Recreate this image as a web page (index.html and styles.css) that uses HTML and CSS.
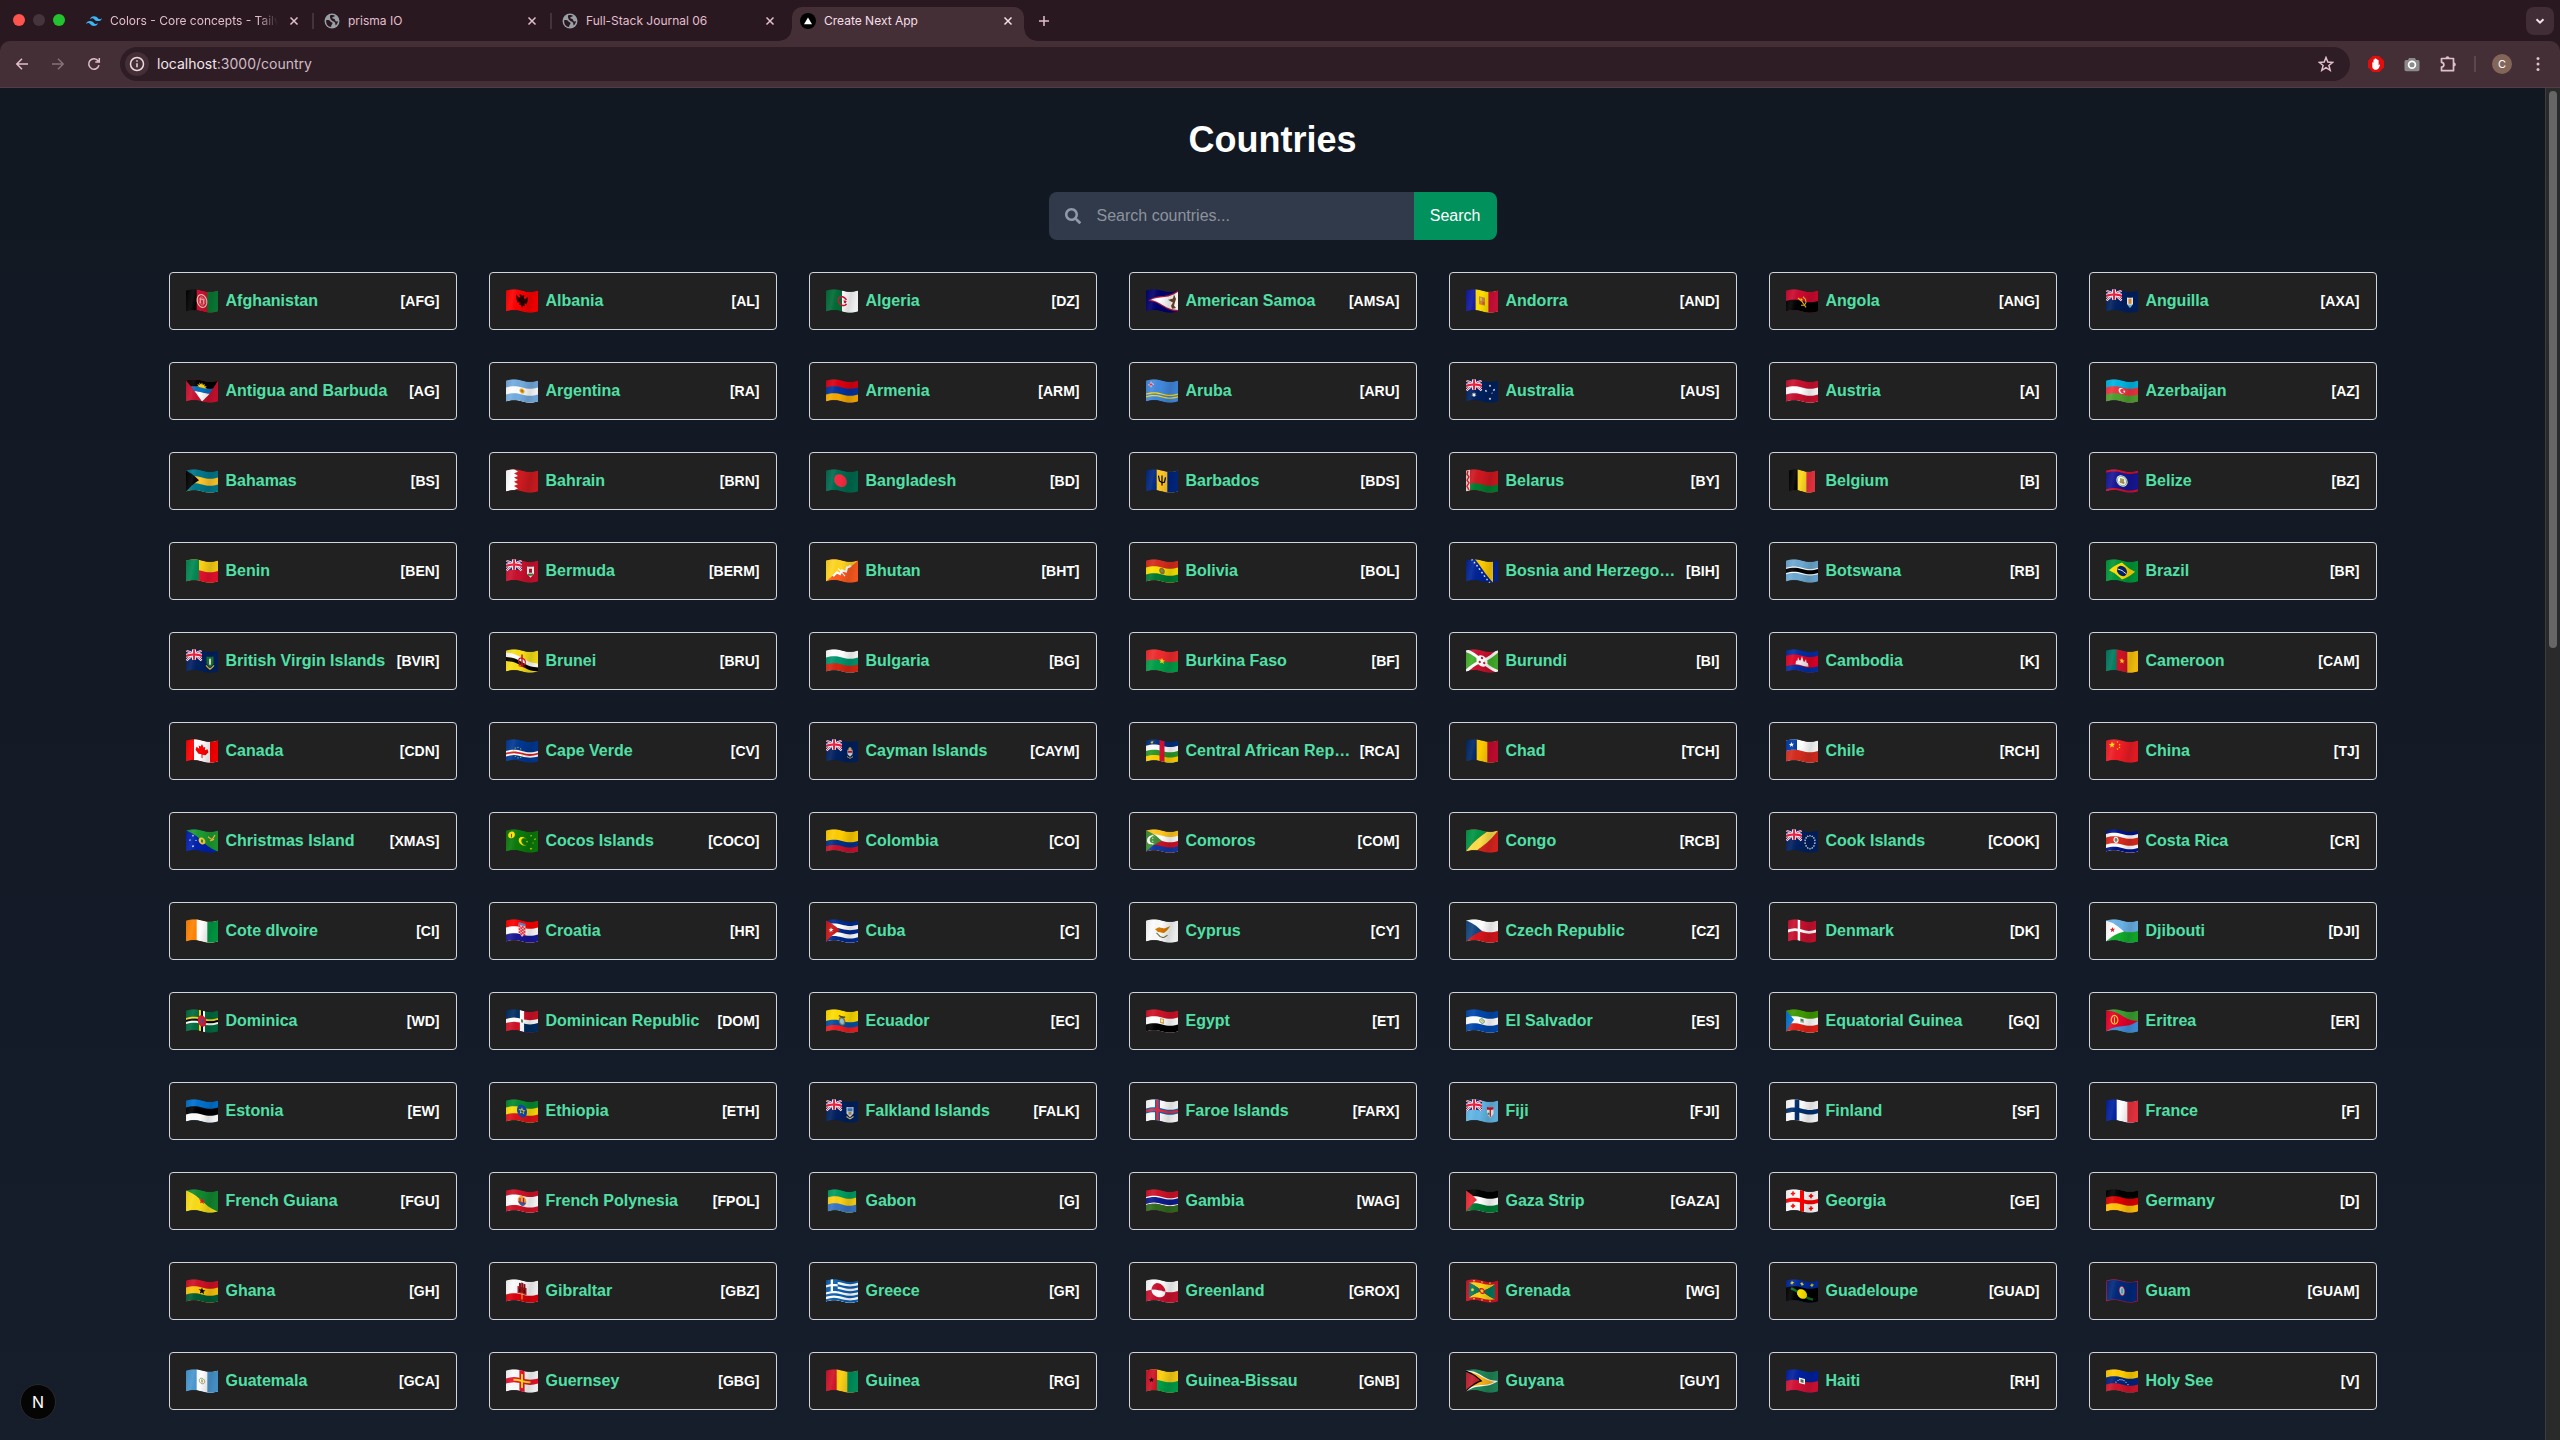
FILE: index.html
```html
<!DOCTYPE html>
<html lang="en">
<head>
<meta charset="utf-8">
<meta name="viewport" content="width=device-width, initial-scale=1">
<title>Create Next App</title>
<link rel="stylesheet" href="styles.css">
<script src="flags.js" defer></script>
</head>
<body>
<svg class="defs" aria-hidden="true">
  <defs>
    <clipPath id="wave"><path id="wave-outline" /></clipPath>
    <linearGradient id="shade" x1="0" x2="1" y1="0" y2="0.15">
      <stop offset="0" stop-color="#000" stop-opacity="0.1" />
      <stop offset="0.25" stop-color="#fff" stop-opacity="0.08" />
      <stop offset="0.5" stop-color="#000" stop-opacity="0" />
      <stop offset="0.8" stop-color="#000" stop-opacity="0.14" />
      <stop offset="1" stop-color="#000" stop-opacity="0.06" />
    </linearGradient>
    <symbol id="close" viewBox="0 0 10 10"><path d="M1.500 1.500l7 7M8.500 1.500l-7 7" fill="none" stroke="currentColor" stroke-width="1.500" /></symbol>
    <symbol id="globe" viewBox="0 0 16 16">
      <circle cx="8" cy="8" r="7.500" fill="#98a0a6" />
      <path d="M2.200 7.200c1.200-.3 3.600 0 4.300 1.200.6 1 1.900.5 2 1.800 0 1.200-1.400 1.400-1.400 3.800C4 13.700 1.700 11 2.200 7.200zM6 2.400c1.600-.7 3.600-.6 5 .3-.4 1.200-2.200.8-2.700 2-.4 1.100 1.300.7 2.200 1.300 1.200.8.300 2.300 1.600 2.400.8.100 1.300-.3 1.800-.2-.1 1.700-.9 3.200-2.100 4.200-.9-1-.1-2.400-1.400-3.300C9.200 8.300 8.400 8.200 7.300 7 6.400 6 5.700 4 6 2.400z" fill="#2a1821" />
    </symbol>
  </defs>
</svg>

<header class="browser">
  <div class="strip">
    <div class="lights"><i class="light light-red"></i><i class="light light-off"></i><i class="light light-green"></i></div>
    <nav class="tabs" aria-label="Tabs">
      <div class="tab">
        <svg class="favicon" viewBox="0 0 16 16"><path d="M8 3.300C5.900 3.300 4.500 4.400 4 6.500c.8-1 1.700-1.400 2.800-1.200.6.200 1 .6 1.500 1.100C9.100 7.200 10 8.100 12 8.100c2.100 0 3.500-1.100 4-3.200-.8 1-1.700 1.400-2.800 1.200-.6-.2-1-.6-1.500-1.100C10.900 4.200 10 3.300 8 3.300zM4 8.100c-2.100 0-3.500 1.100-4 3.200.8-1 1.700-1.400 2.800-1.200.6.200 1 .6 1.500 1.100.8.800 1.700 1.700 3.700 1.700 2.100 0 3.500-1.100 4-3.200-.8 1-1.700 1.400-2.800 1.200-.6-.2-1-.6-1.500-1.100C6.900 9 6 8.100 4 8.100z" fill="#38b6f8" /></svg>
        <span class="tab-title fade">Colors - Core concepts - Tailwind CSS</span>
        <button class="tab-close" aria-label="Close tab"><svg viewBox="0 0 10 10"><use href="#close" /></svg></button>
      </div>
      <i class="tab-sep"></i>
      <div class="tab">
        <svg class="favicon" viewBox="0 0 16 16"><use href="#globe" /></svg>
        <span class="tab-title">prisma IO</span>
        <button class="tab-close" aria-label="Close tab"><svg viewBox="0 0 10 10"><use href="#close" /></svg></button>
      </div>
      <i class="tab-sep"></i>
      <div class="tab">
        <svg class="favicon" viewBox="0 0 16 16"><use href="#globe" /></svg>
        <span class="tab-title">Full-Stack Journal 06</span>
        <button class="tab-close" aria-label="Close tab"><svg viewBox="0 0 10 10"><use href="#close" /></svg></button>
      </div>
      <i class="tab-sep hidden"></i>
      <div class="tab active">
        <svg class="favicon" viewBox="0 0 16 16"><circle cx="8" cy="8" r="8" fill="#000" /><path d="M8 4.500l4 6.700H4z" fill="#fff" /></svg>
        <span class="tab-title">Create Next App</span>
        <button class="tab-close" aria-label="Close tab"><svg viewBox="0 0 10 10"><use href="#close" /></svg></button>
      </div>
    </nav>
    <button class="new-tab" aria-label="New tab"><svg viewBox="0 0 12 12"><path d="M6 1v10M1 6h10" fill="none" stroke="currentColor" stroke-width="1.500" /></svg></button>
    <button class="tab-search" aria-label="Search tabs"><svg viewBox="0 0 12 12"><path d="M2.500 4.200L6 7.700l3.500-3.500" fill="none" stroke="currentColor" stroke-width="2" /></svg></button>
  </div>

  <div class="toolbar">
    <button class="tool" aria-label="Back"><svg viewBox="0 0 16 16"><path d="M14 8H3M8 2.800L2.800 8 8 13.200" /></svg></button>
    <button class="tool dim" aria-label="Forward"><svg viewBox="0 0 16 16"><path d="M2 8h11M8 2.800L13.200 8 8 13.200" /></svg></button>
    <button class="tool" aria-label="Reload"><svg viewBox="0 0 16 16"><path d="M13 9.200A5.200 5.200 0 1 1 12.200 5M13.300 2v4H9.300" /></svg></button>
    <div class="address">
      <span class="site-info"><svg viewBox="0 0 16 16"><circle cx="8" cy="8" r="6.500" /><path d="M8 7.300v4M8 4.300v1.500" /></svg></span>
      <span class="url">localhost<span class="url-path">:3000/country</span></span>
      <button class="star" aria-label="Bookmark"><svg viewBox="0 0 16 16"><path d="M8 1.500l1.800 4.600 4.900.3-3.800 3.100 1.300 4.800L8 11.600l-4.200 2.700 1.300-4.800L1.300 6.400l4.900-.3z" /></svg></button>
    </div>
    <div class="extensions">
      <svg class="ext" viewBox="0 0 16 16"><path d="M4.700 0h6.600L16 4.700v6.600L11.300 16H4.700L0 11.300V4.700z" fill="#e40d0d" /><path d="M4.300 6.500c.5-.5 1.100-.1 1.200.4V4c0-1 1.100-1 1.200 0V2.900c0-1 1.200-1 1.300 0v.6c.1-1 1.300-.9 1.300 0v.8c.2-.8 1.300-.7 1.300.2V9.500c.6-1.300 1.600-1.200 1.400-.4-.6 1.900-1.300 4.700-4 4.700-3.100 0-3.700-1.900-3.700-3.800z" fill="#fff" /></svg>
      <svg class="ext" viewBox="0 0 16 16"><path d="M2 4h2l1-2h6l1 2h1.500A1.800 1.800 0 0 1 15.500 6v7.500a1.700 1.700 0 0 1-1.700 1.700H2.200A1.700 1.700 0 0 1 .5 13.500V5.500A1.500 1.500 0 0 1 2 4z" fill="#8b8b8b" /><circle cx="8" cy="8.800" r="3.400" fill="#8b8b8b" stroke="#fff" stroke-width="1.700" /></svg>
      <svg class="ext puzzle" viewBox="0 0 16 16"><path d="M1.500 2.500h12v12.200h-12v-3.600c3.200-.4 3.200-4.400 0-4.800z" fill="none" stroke="currentColor" stroke-width="1.700" stroke-linejoin="round" /><path d="M5.500 2.200a2 1.900 0 0 1 4 0zM13.800 6.500a2 2 0 0 1 0 4z" fill="currentColor" /></svg>
    </div>
    <i class="tool-sep"></i>
    <span class="avatar">C</span>
    <button class="menu" aria-label="Menu"><svg viewBox="0 0 4 16"><circle cx="2" cy="2.500" r="1.500" /><circle cx="2" cy="8" r="1.500" /><circle cx="2" cy="13.500" r="1.500" /></svg></button>
  </div>
</header>

<div class="page">
  <main class="content">
    <h1 class="title">Countries</h1>
    <form class="search" role="search">
      <label class="search-icon" for="q" aria-label="Search countries"><svg viewBox="0 0 512 512"><path d="M505 442.700L405.300 343c-4.500-4.500-10.600-7-17-7H372c27.600-35.300 44-79.700 44-128C416 93.100 322.900 0 208 0S0 93.100 0 208s93.100 208 208 208c48.300 0 92.700-16.400 128-44v16.300c0 6.400 2.500 12.500 7 17l99.700 99.700c9.400 9.400 24.600 9.400 33.900 0l28.300-28.300c9.400-9.400 9.400-24.600.1-34zM208 336c-70.700 0-128-57.200-128-128 0-70.700 57.200-128 128-128 70.700 0 128 57.200 128 128 0 70.700-57.200 128-128 128z" fill="currentColor" /></svg></label>
      <input class="search-input" id="q" type="text" placeholder="Search countries...">
      <button class="search-button" type="submit">Search</button>
    </form>
    <ul class="grid" id="countries"></ul>
  </main>
  <div class="scrollbar"><div class="thumb"></div></div>
</div>
<div class="dev-badge">N</div>
</body>
</html>
```
FILE: styles.css
```css
* {
  box-sizing: border-box;
}

body {
  margin: 0;
  min-height: 100vh;
  display: flex;
  flex-direction: column;
  background: #121823;
  font-family: "Liberation Sans", Arial, sans-serif;
  font-size: 16px;
  line-height: 24px;
  color: #fff;
}

button {
  border: 0;
  padding: 0;
  margin: 0;
  background: none;
  color: inherit;
  font: inherit;
}

svg {
  display: block;
  flex: none;
}

.defs {
  position: absolute;
  width: 0;
  height: 0;
}

/* Browser chrome */
.browser {
  background: #2a1821;
  color: #e2bfcd;
  font-family: Inter, sans-serif;
  border-bottom: 1px solid #523c45;
}

.strip {
  display: flex;
  align-items: flex-start;
  height: 41px;
  padding: 7px 6px 0 13px;
}

.lights {
  display: flex;
  gap: 8px;
  width: 65px;
  padding-top: 7px;
}

.light {
  width: 12px;
  height: 12px;
  border-radius: 50%;
}

.light-red { background: #ff544d; }
.light-off { background: #46343d; }
.light-green { background: #22c32e; }

.tabs {
  display: flex;
}

.tab {
  position: relative;
  display: flex;
  align-items: center;
  gap: 8px;
  width: 232px;
  height: 34px;
  padding: 0 8px 6px;
  font-size: 12px;
  line-height: 16px;
}

.tab.active {
  background: #442f37;
  border-radius: 10px 10px 0 0;
  color: #f6dfe7;
}

.tab.active::before,
.tab.active::after {
  content: "";
  position: absolute;
  bottom: 0;
  width: 12px;
  height: 12px;
}

.tab.active::before {
  right: 100%;
  background: radial-gradient(circle at 0 0, transparent 11px, #442f37 12px);
}

.tab.active::after {
  left: 100%;
  background: radial-gradient(circle at 100% 0, transparent 11px, #442f37 12px);
}

.favicon {
  width: 16px;
  height: 16px;
}

.tab-title {
  flex: 1;
  overflow: hidden;
  white-space: nowrap;
}

.tab-title.fade {
  mask-image: linear-gradient(to right, #000 88%, transparent);
}

.tab-close {
  width: 16px;
  height: 16px;
  padding: 3px;
}

.tab-close svg {
  width: 10px;
  height: 10px;
}

.tab-sep {
  width: 2px;
  height: 16px;
  margin: 6px 2px 0;
  background: #46323b;
}

.tab-sep.hidden {
  visibility: hidden;
}

.new-tab {
  width: 28px;
  height: 28px;
  margin-left: 6px;
  padding: 7px 8px;
}

.new-tab svg,
.tab-search svg {
  width: 12px;
  height: 12px;
}

.tab-search {
  width: 28px;
  height: 28px;
  margin-left: auto;
  padding: 8px;
  border-radius: 8px;
  background: #402d35;
  color: #f6dfe7;
}

.toolbar {
  display: flex;
  align-items: center;
  height: 46px;
  padding: 0 20px 0 14px;
  background: #442f37;
  border-radius: 10px 10px 0 0;
}

.tool {
  width: 16px;
  margin-right: 20px;
}

.tool svg,
.star svg,
.site-info svg {
  width: 16px;
  height: 16px;
  fill: none;
  stroke: currentColor;
  stroke-width: 1.5;
}

.tool.dim {
  color: #85717a;
}

.tool + .address {
  margin-left: -2px;
}

.address {
  flex: 1;
  display: flex;
  align-items: center;
  gap: 8px;
  height: 34px;
  padding: 0 16px 0 5px;
  border-radius: 17px;
  background: #2f1d26;
}

.site-info {
  padding: 4px;
  border-radius: 50%;
  background: #442f37;
  color: #ecd9e0;
}

.url {
  flex: 1;
  font-size: 14px;
  line-height: 20px;
  color: #f3e6eb;
}

.url-path {
  color: #d0bcc5;
}

.extensions {
  display: flex;
  gap: 20px;
  margin-left: 18px;
}

.ext {
  width: 16px;
  height: 16px;
}

.puzzle {
  color: #e2bfcd;
}

.tool-sep {
  width: 2px;
  height: 16px;
  margin: 0 16px 0 18px;
  background: #5e4650;
}

.avatar {
  width: 20px;
  height: 20px;
  border-radius: 50%;
  background: #836659;
  color: #fff;
  font-size: 11px;
  line-height: 20px;
  text-align: center;
}

.menu {
  margin-left: 24px;
}

.menu svg {
  width: 4px;
  height: 16px;
  fill: currentColor;
}

/* Page */
.page {
  flex: 1;
  display: flex;
  background: linear-gradient(#111822, #161d2b);
}

.content {
  flex: 1;
  min-width: 0;
  padding: 32px 32px 24px;
}

.title {
  margin: 0 0 32px;
  font-size: 36px;
  line-height: 40px;
  font-weight: 700;
  text-align: center;
}

.search {
  position: relative;
  display: flex;
  max-width: 448px;
  height: 48px;
  margin: 0 auto 32px;
}

.search-icon {
  position: absolute;
  left: 16px;
  top: 16px;
  color: #9099a8;
}

.search-icon svg {
  width: 16px;
  height: 16px;
}

.search-input {
  flex: 1;
  min-width: 0;
  border: 0;
  padding: 0 16px 0 48px;
  border-radius: 8px 0 0 8px;
  background: #303a4a;
  color: #fff;
  font: inherit;
}

.search-input::placeholder {
  color: #8d939d;
}

.search-button {
  padding: 0 16px;
  border-radius: 0 8px 8px 0;
  background: #00915d;
  color: #fff;
}

.grid {
  display: grid;
  grid-template-columns: repeat(auto-fill, 288px);
  justify-content: center;
  gap: 32px;
  margin: 0;
  padding: 0;
  list-style: none;
}

.card {
  display: flex;
  align-items: center;
  gap: 8px;
  padding: 16px;
  border: 1px solid #d1d5dc;
  border-radius: 4px;
  background: #212121;
}

.flag {
  width: 32px;
  height: 24px;
}

.name {
  flex: 1;
  overflow: hidden;
  text-overflow: ellipsis;
  white-space: nowrap;
  font-weight: 700;
  color: #50e0a6;
  text-decoration: none;
}

.code {
  font-size: 14px;
  line-height: 20px;
  font-weight: 700;
}

.scrollbar {
  width: 15px;
  padding: 3px 3px 0;
  background: #2a2a2a;
  border-left: 1px solid #3d3d3d;
}

.thumb {
  width: 8px;
  height: 42%;
  max-height: 557px;
  border-radius: 4px;
  background: #666;
}

.dev-badge {
  position: fixed;
  left: 20px;
  bottom: 20px;
  width: 36px;
  height: 36px;
  border: 1px solid #2b2b2b;
  border-radius: 50%;
  background: #050505;
  font-family: Inter, sans-serif;
  font-size: 16px;
  line-height: 34px;
  text-align: center;
}
```
FILE: flags.js
```js
// Flags are described on a flat 32 x 21 field, then every outline is bent along a wave.
const W = 32, H = 21;
const bend = (x, y) => [x, y + 1.5 - 1.3 * Math.sin((2 * Math.PI * x) / W)];

function trace(points, closed) {
  const out = [];
  const n = points.length;
  for (let i = 0; i < (closed ? n : n - 1); i++) {
    const [x1, y1] = points[i], [x2, y2] = points[(i + 1) % n];
    const steps = Math.max(1, Math.ceil(Math.abs(x2 - x1) / 2));
    for (let s = 0; s < steps; s++) out.push(bend(x1 + ((x2 - x1) * s) / steps, y1 + ((y2 - y1) * s) / steps));
  }
  if (!closed) out.push(bend(...points[n - 1]));
  return 'M' + out.map(([x, y]) => x.toFixed(2) + ' ' + y.toFixed(2)).join('L') + (closed ? 'Z' : '');
}

const pairs = (list) => list.reduce((a, v, i) => (i % 2 ? a[a.length - 1].push(v) : a.push([v]), a), []);
const p = (c, ...xy) => `<path d="${trace(pairs(xy), true)}" fill="${c}"/>`;
const l = (c, w, ...xy) => `<path d="${trace(pairs(xy), false)}" fill="none" stroke="${c}" stroke-width="${w}"/>`;
const r = (x, y, w, h, c) => p(c, x, y, x + w, y, x + w, y + h, x, y + h);
const oval = (x, y, rx, ry) => Array.from({ length: 24 }, (_, i) => [x + rx * Math.cos((i * Math.PI) / 12), y + ry * Math.sin((i * Math.PI) / 12)]).flat();
const o = (x, y, rad, c, ry = rad) => p(c, ...oval(x, y, rad, ry));
const ring = (x, y, rad, w, c, ry = rad) => { const q = oval(x, y, rad, ry); return l(c, w, ...q, q[0], q[1]); };
const st = (x, y, rad, c, n = 5, k = 0.42) => p(c, ...Array.from({ length: n * 2 }, (_, i) => {
  const q = i % 2 ? rad * k : rad, a = (i * Math.PI) / n - Math.PI / 2;
  return [x + q * Math.cos(a), y + q * Math.sin(a)];
}).flat());
const h = (...c) => c.map((k, i) => (k === c[i - 1] ? '' : r(0, (H * i) / c.length, W, H - (H * i) / c.length, k))).join('');
const v = (...c) => c.map((k, i) => (k === c[i - 1] ? '' : r((W * i) / c.length, 0, W - (W * i) / c.length, H, k))).join('');
const cross = (c, w, x = 12) => r(x - w / 2, 0, w, H, c) + r(0, H / 2 - w / 2, W, w, c);
const tri = (c, x = 13) => p(c, 0, 0, x, H / 2, 0, H);
const shield = (x, y, w, hh, c) => p(c, x, y, x + w, y, x + w, y + hh * 0.65, x + w / 2, y + hh, x, y + hh * 0.65);
const moon = (x, y, rad, c, bg, d = 0.35) => o(x, y, rad, c) + o(x + rad * d, y, rad * 0.8, bg);
const jack = () => r(0, 0, 16, 10.5, '#012169') + l('#fff', 2.2, 0.4, 0.4, 15.6, 10.1) + l('#fff', 2.2, 0.4, 10.1, 15.6, 0.4)
  + l('#e4173a', 0.9, 0.4, 0.4, 15.6, 10.1) + l('#e4173a', 0.9, 0.4, 10.1, 15.6, 0.4)
  + r(6, 0, 4, 10.5, '#fff') + r(0, 3.3, 16, 4, '#fff') + r(6.9, 0, 2.2, 10.5, '#e4173a') + r(0, 4.2, 16, 2.2, '#e4173a');
const navy = '#00205f';
const ensign = (bg, ...parts) => h(bg) + jack() + parts.join('');

const R = '#d8121f', WH = '#fff', K = '#000';

const countries = [
  ['Afghanistan', 'AFG', v(K, '#c8102e', '#0a7a35') + ring(16, 10.5, 4.8, 1.2, '#f3b9b4', 6.3) + ring(16, 10.5, 2.9, 0.8, '#f0aaa6', 4) + r(14, 8, 4, 5, '#eba09c') + r(15.2, 9.5, 1.6, 3.5, '#c8102e')],
  ['Albania', 'AL', h('#fc0000') + p('#250000', 16, 6, 17, 4, 18.5, 4.5, 17.8, 7, 19, 8, 22, 5, 21.5, 10, 20.5, 13, 18.5, 12, 18.8, 15, 17, 15, 16, 17.5, 15, 15, 13.2, 15, 13.5, 12, 11.5, 13, 10.5, 10, 10, 5, 13, 8, 14.2, 7, 13.5, 4.5, 15, 4)],
  ['Algeria', 'DZ', v('#006a35', WH) + ring(16.5, 10.5, 4.3, 1.5, '#d21034') + r(19.3, 8.5, 3, 4, WH) + st(19, 10.5, 2.2, '#d21034')],
  ['American Samoa', 'AMSA', h('#00006c') + p('#b8183b', 2, 10.5, 32, 0, 32, 21) + p(WH, 5, 10.5, 32, 1.5, 32, 19.5) + p('#6b4220', 22, 8, 27, 7, 28, 3, 30, 8, 28, 14, 30, 17, 26, 17, 25, 14, 27, 11)],
  ['Andorra', 'AND', v('#1018a0', '#1018a0', '#1018a0', '#fedf00', '#fedf00', '#fedf00', '#fedf00', '#d0103a', '#d0103a', '#d0103a') + r(13, 6.5, 6, 8, '#c7883a') + r(14, 7.5, 2, 3, '#e0b060') + r(16.5, 11, 2, 2.5, '#e05020')],
  ['Angola', 'ANG', h('#cc092f', K) + l('#e8b71a', 1.1, 17, 6, 19.5, 8, 20, 11, 18.5, 14, 15, 15) + l('#e8b71a', 1.2, 12, 8.5, 16, 11, 20, 16) + st(15.5, 9, 1.6, '#ffcb00')],
  ['Anguilla', 'AXA', ensign(navy, shield(21, 6, 6, 10, WH), r(22.5, 7, 3, 5, '#f39a2d'), p('#6cc4e8', 21.3, 13, 26.7, 13, 24, 16))],
  ['Antigua and Barbuda', 'AG', h('#c8102e') + p(K, 0, 0, 32, 0, 27, 7, 5, 7) + st(16, 7.5, 5.5, '#fcd116', 12, 0.6) + p('#0072c6', 5, 7.2, 27, 7.2, 23.5, 12, 8.5, 12) + p(WH, 8.5, 12, 23.5, 12, 16, 21)],
  ['Argentina', 'RA', h('#74acdf', WH, '#74acdf') + st(16, 10.5, 3, '#f0a818', 12, 0.7) + o(16, 10.5, 1.3, '#c07a20')],
  ['Armenia', 'ARM', h('#d90012', '#0033a0', '#f2a800')],
  ['Aruba', 'ARU', h('#4189dd') + r(0, 13, 32, 1.3, '#f9d616') + r(0, 15.7, 32, 1.3, '#f9d616') + st(5, 5, 3.3, WH, 4, 0.4) + st(5, 5, 2.6, '#e0243f', 4, 0.35)],
  ['Australia', 'AUS', ensign(navy, st(8, 15.5, 2.7, WH, 7), st(24, 4, 1.5, WH, 7), st(28, 8.5, 1.5, WH, 7), st(20, 9.5, 1.5, WH, 7), st(24, 17, 1.6, WH, 7), st(26, 11.5, 0.9, WH))],
  ['Austria', 'A', h('#c8102e', WH, '#c8102e')],
  ['Azerbaijan', 'AZ', h('#00b5e2', '#ef3340', '#509e2f') + moon(15.5, 10.5, 2.9, WH, '#ef3340') + st(18.3, 10.5, 1.4, WH, 8, 0.5)],
  ['Bahamas', 'BS', h('#00778b', '#ffc72c', '#00778b') + tri(K)],
  ['Bahrain', 'BRN', h('#ce1b20') + p(WH, 0, 0, 8, 0, 12, 2.1, 8, 4.2, 12, 6.3, 8, 8.4, 12, 10.5, 8, 12.6, 12, 14.7, 8, 16.8, 12, 18.9, 8, 21, 0, 21)],
  ['Bangladesh', 'BD', h('#006a4e') + o(14.5, 10.5, 6.3, '#f42a41')],
  ['Barbados', 'BDS', v('#00267f', '#ffc726', '#00267f') + l(K, 1.2, 16, 5, 16, 15) + l(K, 1.2, 12.5, 6, 13.5, 11, 16, 12, 18.5, 11, 19.5, 6)],
  ['Belarus', 'BY', h('#ce1720', '#ce1720', '#007c30') + r(0, 0, 4, 21, '#f0c8c8') + l('#ce1720', 1.4, 2, 1, 1, 4, 3, 7, 1, 10, 3, 13, 1, 16, 3, 20)],
  ['Belgium', 'B', v(K, '#fdda24', '#ef3340'), 0.82],
  ['Belize', 'BZ', h('#171696') + r(0, 0, 32, 2.2, '#ce1126') + r(0, 18.8, 32, 2.2, '#ce1126') + o(16, 10.5, 5.6, WH) + ring(16, 10.5, 4.6, 0.7, '#48a048') + r(14, 8, 4, 5, '#9aa060') + r(13.5, 11, 5, 1.5, '#b98a50')],
  ['Benin', 'BEN', h('#fcd116', '#e8112d') + r(0, 0, 13, 21, '#008751')],
  ['Bermuda', 'BERM', ensign('#c8102e', shield(21, 5, 7, 11, WH), r(23, 7, 3, 4, '#c8102e'), r(22, 12, 5, 2, '#3a8a40'))],
  ['Bhutan', 'BHT', h('#ff5a1f') + p('#ffd520', 0, 0, 32, 0, 0, 21) + l(WH, 2.2, 7, 17, 11, 13, 14, 14, 16, 10, 20, 10, 21, 6, 25, 4) + l(WH, 1.2, 12, 9, 15, 11, 19, 15)],
  ['Bolivia', 'BOL', h('#d52b1e', '#f9e300', '#007934') + o(16, 10.5, 2.8, '#9a6a28', 3.3) + o(16, 10.5, 1.4, '#5d9d60')],
  ['Bosnia and Herzegovina', 'BIH', h('#002395') + p('#fecb00', 9, 0, 27, 0, 27, 21) + [0, 1, 2, 3, 4, 5, 6, 7].map((i) => st(6 + i * 2.5, 0.5 + i * 2.9, 1.3, WH)).join('')],
  ['Botswana', 'RB', h('#6da9d2') + r(0, 7.3, 32, 6.4, WH) + r(0, 8.5, 32, 4, K)],
  ['Brazil', 'BR', h('#009739') + p('#fedd00', 16, 2, 29, 10.5, 16, 19, 3, 10.5) + o(16, 10.5, 5, '#012169') + l(WH, 0.9, 11.5, 9.5, 16, 10, 20.5, 12.5)],
  ['British Virgin Islands', 'BVIR', ensign(navy, shield(20.5, 5, 7, 11, '#1c7b38'), r(23, 7, 2, 6, '#f0efe0'), l('#e4c33c', 1.2, 20, 14, 24, 17.5, 28, 14))],
  ['Brunei', 'BRU', h('#f7e017') + p(WH, 0, 2, 32, 13, 32, 17, 0, 6.5) + p(K, 0, 6.5, 32, 17, 32, 21, 0, 10.5) + ring(16, 11, 3.4, 1.2, '#cf1126') + l('#cf1126', 1.5, 16, 4, 16, 16) + l('#cf1126', 1, 12.5, 16, 19.5, 16)],
  ['Bulgaria', 'BG', h(WH, '#00966e', '#d62612')],
  ['Burkina Faso', 'BF', h('#ef2b2d', '#009e49') + st(16, 10.5, 3.3, '#fcd116')],
  ['Burundi', 'BI', h('#c8102e') + p('#43b02a', 0, 0, 16, 10.5, 0, 21) + p('#43b02a', 32, 0, 16, 10.5, 32, 21) + l(WH, 3, 0, 0, 32, 21) + l(WH, 3, 0, 21, 32, 0) + o(16, 10.5, 5.5, WH) + st(16, 7.5, 1.5, '#c8102e', 6, 0.6) + st(13.8, 12, 1.5, '#c8102e', 6, 0.6) + st(18.2, 12, 1.5, '#c8102e', 6, 0.6)],
  ['Cambodia', 'K', h('#032ea1', '#e00025', '#e00025', '#032ea1') + p('#f3e6ea', 9.5, 15, 10, 11.5, 11.5, 11, 12, 7.5, 13.3, 10.5, 14.5, 10.5, 16, 5.5, 17.5, 10.5, 18.7, 10.5, 20, 7.5, 20.5, 11, 22, 11.5, 22.5, 15)],
  ['Cameroon', 'CAM', v('#007a5e', '#ce1126', '#fcc40c') + st(16, 10.5, 2.9, '#fcd116')],
  ['Canada', 'CDN', v('#fd0000', WH, WH, '#fd0000') + p('#fd0000', 16, 3.5, 17.5, 6.5, 19.3, 5.8, 18.8, 9, 21.5, 7.5, 22.5, 10.5, 19.5, 14, 16.5, 14, 16.5, 17.5, 15.5, 17.5, 15.5, 14, 12.5, 14, 9.5, 10.5, 10.5, 7.5, 13.2, 9, 12.7, 5.8, 14.5, 6.5)],
  ['Cape Verde', 'CV', h('#003893') + r(0, 10.5, 32, 5.4, WH) + r(0, 12.3, 32, 1.8, '#cf2027') + [0, 1, 2, 3, 4, 5, 6, 7, 8, 9].map((i) => st(12 + 4.7 * Math.sin(i * 0.628), 13 - 5.2 * Math.cos(i * 0.628), 0.9, '#f7d116')).join('')],
  ['Cayman Islands', 'CAYM', ensign(navy, o(24, 7, 1.6, '#d9b44a'), shield(21.5, 8, 5, 7, '#cfe0ea'), r(22, 9, 4, 2, R), l('#d9b44a', 1, 21, 15, 24, 16.5, 27, 15))],
  ['Central African Republic', 'RCA', h('#003082', WH, '#289728', '#ffce00') + r(13.5, 0, 5, 21, '#d21034') + st(6, 3, 1.9, '#ffce00')],
  ['Chad', 'TCH', v('#002664', '#fecb00', '#c60c30')],
  ['Chile', 'RCH', h(WH, '#d52b1e') + r(0, 0, 11, 10.5, '#0039a6') + st(5.5, 5.3, 2.7, WH)],
  ['China', 'TJ', h('#ee1c25') + st(6, 5.5, 3.3, '#ffde00') + st(11.5, 2.5, 1.2, '#ffde00') + st(13.5, 4.8, 1.2, '#ffde00') + st(13.5, 7.6, 1.2, '#ffde00') + st(11.5, 9.6, 1.2, '#ffde00')],
  ['Christmas Island', 'XMAS', h('#0021ad') + p('#1c9a30', 0, 0, 32, 0, 32, 21) + o(16, 10.5, 3.4, '#ffc639') + r(15, 9, 2, 3, '#1c9a30') + l('#ffc639', 1.3, 22, 5, 26, 8, 29, 4) + l('#ffc639', 1.3, 24, 9, 28, 8) + st(7, 6.5, 1.1, WH) + st(4, 10.5, 1.1, WH) + st(10, 11, 0.9, WH) + st(7, 17, 1.4, WH)],
  ['Cocos Islands', 'COCO', h('#0a7a0a') + o(5.5, 5.5, 3.4, '#ffe000') + l('#6b4a10', 1, 5.5, 4.5, 5.5, 8) + moon(17, 10.5, 4.2, '#ffe000', '#0a7a0a', 0.4) + st(25, 4, 1.2, '#ffe000') + st(29, 8, 1.2, '#ffe000') + st(21, 10, 1.2, '#ffe000') + st(25, 17, 1.4, '#ffe000') + st(27, 11.5, 0.8, '#ffe000')],
  ['Colombia', 'CO', h('#ffcd00', '#ffcd00', '#003087', '#c8102e')],
  ['Comoros', 'COM', h('#ffc61e', WH, '#ce1126', '#1237a0') + tri('#3d8e33', 16) + moon(5.5, 10.5, 4.5, WH, '#3d8e33', 0.4) + [6, 9, 12, 15].map((y) => st(6.8, y, 0.9, WH)).join('')],
  ['Congo', 'RCB', h('#dc241f') + p('#009543', 0, 0, 21, 0, 0, 21) + p('#fbde4a', 21, 0, 32, 0, 11, 21, 0, 21)],
  ['Cook Islands', 'COOK', ensign(navy, [0, 1, 2, 3, 4, 5, 6, 7, 8, 9, 10, 11, 12, 13].map((i) => st(24 + 5 * Math.sin(i * 0.449), 10.5 - 6.5 * Math.cos(i * 0.449), 1.2, WH)).join(''))],
  ['Costa Rica', 'CR', h('#001489', WH, '#da291c', '#da291c', WH, '#001489') + o(10, 10.5, 2.6, WH, 3.1) + o(10, 10.5, 1.5, '#6d8a68', 2)],
  ['Cote dIvoire', 'CI', v('#ff8200', WH, '#009a44')],
  ['Croatia', 'HR', h('#fd0000', WH, '#171796') + shield(12.5, 4.5, 7, 12, '#f6b9b9') + [0, 1, 2, 3, 4, 5].map((i) => r(12.7 + (i % 2) * 1.7, 5.5 + i * 1.5, 1.6, 1.5, '#e8192c') + r(16 + (i % 2) * 1.7, 5.5 + i * 1.5, 1.6, 1.5, '#e8192c')).join('') + r(12.5, 2.5, 7, 2.4, '#5a85c8')],
  ['Cuba', 'C', h('#002a8f', WH, '#002a8f', WH, '#002a8f') + tri('#cb1515', 14) + st(5, 10.5, 2.6, WH)],
  ['Cyprus', 'CY', h('#fbfbfb') + p('#d57800', 9, 10, 13, 7.5, 18, 7.5, 24.5, 4, 21, 9, 18, 12, 12, 12.5) + l('#6f7a4a', 1.2, 10.5, 13.5, 14, 16.5, 16, 16.8) + l('#6f7a4a', 1.2, 21.5, 13.5, 18, 16.5, 16, 16.8)],
  ['Czech Republic', 'CZ', h(WH, '#d7141a') + tri('#11457e', 16)],
  ['Denmark', 'DK', h('#c8102e') + cross(WH, 2.8, 12.5), 0.88],
  ['Djibouti', 'DJI', h('#6ab2e7', '#12ad2b') + tri(WH, 18) + st(6.5, 10.5, 2.8, '#d7141a')],
  ['Dominica', 'WD', h('#006b3f') + r(0, 7.5, 32, 2, '#fcd116') + r(0, 9.5, 32, 2, K) + r(0, 11.5, 32, 2, WH) + r(13, 0, 2, 21, '#fcd116') + r(15, 0, 2, 21, K) + r(17, 0, 2, 21, WH) + o(16, 10.5, 4.3, '#d41c30', 5.6) + o(16, 10.5, 1.5, '#5a4b8a', 2.5)],
  ['Dominican Republic', 'DOM', h('#002d62', '#ce1126') + p('#ce1126', 16, 0, 32, 0, 32, 10.5, 16, 10.5) + p('#002d62', 16, 10.5, 32, 10.5, 32, 21, 16, 21) + cross(WH, 4.2, 16) + r(15, 9, 2, 3, '#5f8062')],
  ['Ecuador', 'EC', h('#ffdd00', '#ffdd00', '#034ea2', '#ed1c24') + o(16, 10.5, 3.3, '#8a7a40', 4.4) + o(16, 10.8, 2, '#8cc5e0', 2.8) + l('#4a3520', 1.3, 12.8, 5.8, 16, 6.5, 19.2, 5.8)],
  ['Egypt', 'ET', h('#ce1126', WH, K) + r(14, 8, 4, 5, '#d8a848') + r(15.2, 9, 1.6, 2.5, WH)],
  ['El Salvador', 'ES', h('#0047ab', WH, '#0047ab') + ring(16, 10.5, 2.2, 1, '#3c8a50') + o(16, 10.3, 1, '#d8b848')],
  ['Equatorial Guinea', 'GQ', h('#3e9a00', WH, '#e32118') + tri('#0073ce', 8) + r(14, 8.3, 4, 4, '#b9bfb0') + o(16, 9.7, 1.3, '#3b8a40')],
  ['Eritrea', 'ER', h('#3a9f30', '#418fde') + p('#e4002b', 0, 0, 32, 10.5, 0, 21) + ring(8.5, 10.5, 3.3, 1.2, '#ffc72c', 4.3) + l('#ffc72c', 1.1, 8.5, 8, 8.5, 14)],
  ['Estonia', 'EW', h('#0072ce', K, WH)],
  ['Ethiopia', 'ETH', h('#078930', '#fcdd09', '#da121a') + o(16, 10.5, 5, '#0f47af', 6.3) + st(16, 10.5, 3.7, '#fcdd09') + st(16, 10.8, 2, '#0f47af')],
  ['Falkland Islands', 'FALK', ensign(navy, shield(20.5, 5.5, 7, 10, '#d8e4f0'), r(21.5, 6.5, 5, 3, '#3f7fc8'), r(22.5, 10, 3, 3, '#c0904a'), l('#e0c070', 1.2, 20.5, 15, 24, 17, 27.5, 15))],
  ['Faroe Islands', 'FARX', h('#fbfbfb') + cross('#0065bd', 5, 11.5) + cross('#ed2939', 2.6, 11.5)],
  ['Fiji', 'FJI', ensign('#62b5e5', shield(21, 5.5, 6.5, 10.5, '#f5efe8'), r(21, 5.5, 6.5, 2.6, '#c8102e'), r(23.7, 8, 1.2, 7, '#c8102e'), r(21.5, 11, 2, 2, '#3d8a45'))],
  ['Finland', 'SF', h('#fbfbfb') + cross('#002f6c', 4.6, 11)],
  ['France', 'F', v('#00209f', WH, '#ef3340')],
  ['French Guiana', 'FGU', h('#128830') + p('#f9dc17', 0, 0, 32, 21, 0, 21) + st(16, 10.5, 3.3, '#e01b22')],
  ['French Polynesia', 'FPOL', h('#ce1126', WH, WH, '#ce1126') + o(16, 10.5, 4.3, '#f5a13c', 5) + p('#285fb8', 11.9, 11.5, 20.1, 11.5, 18, 14.5, 16, 15.5, 14, 14.5) + l('#b0202c', 1.2, 14, 8, 14, 13) + l('#b0202c', 1.2, 17.5, 7, 17.5, 13)],
  ['Gabon', 'G', h('#009e60', '#fcd116', '#3a75c4'), 0.9],
  ['Gambia', 'WAG', h('#ce1126') + r(0, 6.5, 32, 8, WH) + r(0, 7.8, 32, 5.6, '#0c1c8c') + r(0, 14.5, 32, 6.5, '#2f6b1e')],
  ['Gaza Strip', 'GAZA', h(K, WH, '#007a33') + tri('#ee2a35', 11)],
  ['Georgia', 'GE', h('#fbfbfb') + cross('#fd0000', 4, 16) + [[7, 4.3], [25, 4.3], [7, 16.7], [25, 16.7]].map(([x, y]) => r(x - 0.8, y - 2.2, 1.6, 4.4, '#fd0000') + r(x - 2.2, y - 0.8, 4.4, 1.6, '#fd0000')).join('')],
  ['Germany', 'D', h(K, '#dd0000', '#ffc20a')],
  ['Ghana', 'GH', h('#ce1126', '#fcc40c', '#005a35') + st(16, 10.5, 3.6, K)],
  ['Gibraltar', 'GBZ', h('#fbfbfb', '#fbfbfb', '#da000c') + r(11.5, 6.5, 9, 7, '#b3141e') + r(13, 3, 2, 9, '#8c1018') + r(15.2, 2.2, 2, 9, '#8c1018') + r(17.4, 3, 2, 9, '#8c1018') + r(13, 9, 1.4, 3, '#3d1010') + r(17.6, 9, 1.4, 3, '#3d1010') + l('#e0a820', 1.2, 16, 12.5, 16, 19)],
  ['Greece', 'GR', h('#0d5eaf', WH, '#0d5eaf', WH, '#0d5eaf', WH, '#0d5eaf', WH, '#0d5eaf') + r(0, 0, 11.7, 11.7, '#0d5eaf') + r(4.7, 0, 2.3, 11.7, WH) + r(0, 4.7, 11.7, 2.3, WH)],
  ['Greenland', 'GROX', h('#fbfbfb', '#c8102e') + p('#c8102e', ...oval(12.5, 10.5, 7, 7).slice(24), 19.5, 10.5) + p('#fbfbfb', ...oval(12.5, 10.5, 7, 7).slice(0, 26))],
  ['Grenada', 'WG', h('#ce1126') + p('#fcd116', 3, 3, 29, 3, 16, 10.5) + p('#fcd116', 3, 18, 29, 18, 16, 10.5) + p('#007a5e', 3, 3, 16, 10.5, 3, 18) + p('#007a5e', 29, 3, 16, 10.5, 29, 18) + o(16, 10.5, 3, '#ce1126') + st(16, 10.5, 2.7, '#fcd116') + [8, 16, 24].map((x) => st(x, 1.5, 1.3, '#fcd116') + st(x, 19.5, 1.3, '#fcd116')).join('') + o(6.5, 10.5, 1.4, '#fcd116')],
  ['Guadeloupe', 'GUAD', h('#002a9c', K, K) + [6, 16, 26].map((x) => st(x, 3.5, 2.3, '#ffdc00', 4, 0.4)).join('') + l('#0d6b22', 2.4, 5, 9, 11, 12, 18, 15, 27, 18) + o(16, 13.5, 5, '#f8e000', 4.7)],
  ['Guam', 'GUAM', h('#b8153a') + r(0.8, 0.8, 30.4, 19.4, '#00297b') + o(16, 10.5, 3, '#c8102e', 5) + o(16, 10.5, 2.4, '#8fc8df', 4.3) + l('#3f7c45', 1, 16, 8, 16, 13)],
  ['Guatemala', 'GCA', v('#4997d0', WH, '#4997d0') + ring(16, 10.5, 2.7, 1, '#8fa86a') + r(15, 9, 2, 3, '#c9b078')],
  ['Guernsey', 'GBG', h('#fbfbfb') + cross('#e8112d', 5.2, 16) + r(15, 3.5, 2, 14, '#f9dd16') + r(7.5, 9.5, 17, 2, '#f9dd16')],
  ['Guinea', 'RG', v('#ce1126', '#fcd116', '#009460')],
  ['Guinea-Bissau', 'GNB', h('#fcd116', '#009e49') + r(0, 0, 11, 21, '#ce1126') + st(5.5, 10.5, 2.9, K)],
  ['Guyana', 'GUY', h('#1f8558') + p(WH, 0, 0, 32, 10.5, 0, 21) + p('#fcb515', 0, 1.5, 29, 10.5, 0, 19.5) + p(K, 0, 0, 16.5, 10.5, 0, 21) + p('#c0202e', 0, 1.5, 14, 10.5, 0, 19.5)],
  ['Haiti', 'RH', h('#00209f', '#d21034') + r(13, 7.8, 6, 5.4, WH) + r(14.5, 9, 3, 3, '#46704a')],
  ['Holy See', 'V', h('#ffcc00', '#00247d', '#cf142b') + [-3, -2, -1, 0, 1, 2, 3].map((i) => st(16 + i * 2, 9.3 + i * i * 0.4, 0.9, WH)).join('')],
];

const field = trace(pairs([0, 0, W, 0, W, H, 0, H]), true);
document.getElementById('wave-outline').setAttribute('d', field);

document.getElementById('countries').innerHTML = countries.map(([name, code, art, scale = 1]) => `
  <li class="card">
    <svg class="flag" viewBox="0 0 32 24" aria-hidden="true">
      <g transform="translate(${16 - 16 * scale} 0) scale(${scale} 1)"><g clip-path="url(#wave)">${art}<path d="${field}" fill="url(#shade)"/></g></g>
    </svg>
    <a class="name" href="#${code}">${name}</a>
    <span class="code">[${code}]</span>
  </li>`).join('');
```
